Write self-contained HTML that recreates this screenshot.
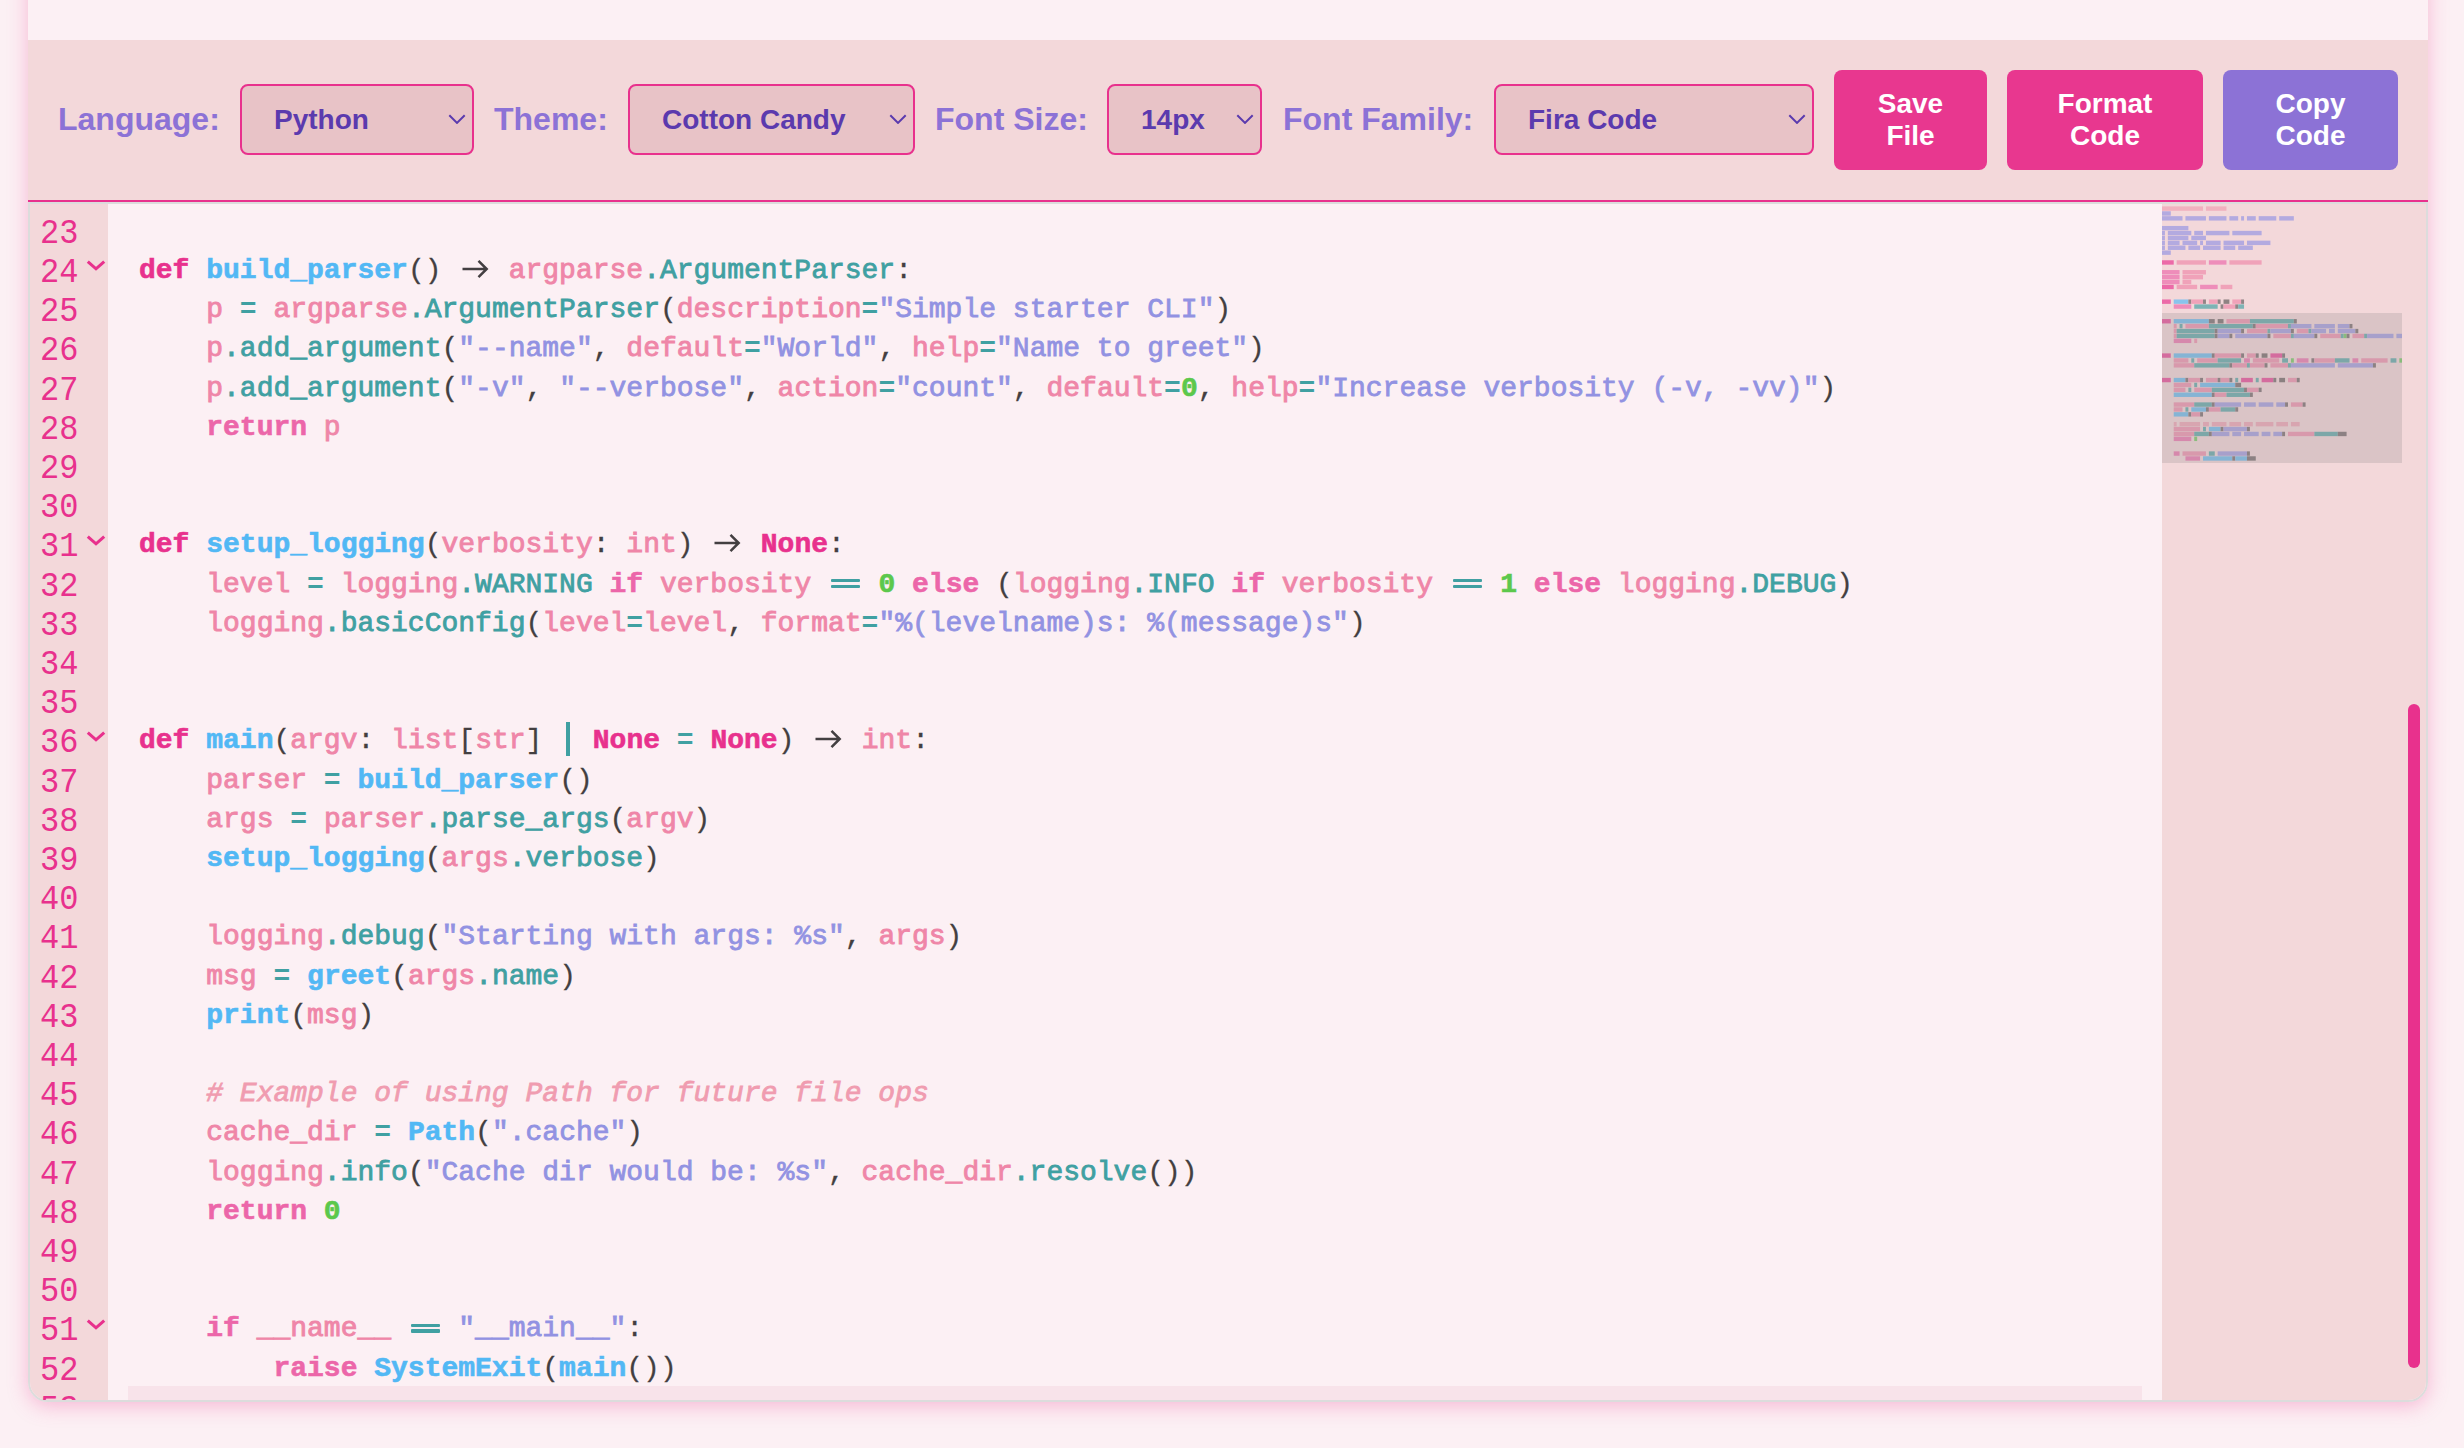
<!DOCTYPE html>
<html><head><meta charset="utf-8">
<style>
html,body{margin:0;padding:0}
@media (max-width:1300px){html{zoom:0.5}}
body{width:2464px;height:1448px;overflow:hidden;position:relative;background:#fcf0f4;font-family:"Liberation Sans",sans-serif}
.card{position:absolute;left:28px;top:-40px;width:2400px;height:1442px;background:#fcf0f4;border-radius:20px;box-shadow:0 4px 20px rgba(236,72,153,.34)}
.toolbar{position:absolute;left:28px;top:40px;width:2400px;height:160px;background:#f3d8da;border-bottom:2px solid #e8318d}
.lbl{position:absolute;top:0;height:159px;line-height:159px;font-weight:bold;font-size:32px;color:#8c72d6;white-space:nowrap}
.sel{position:absolute;top:84px;height:67px;border:2px solid #e8318d;border-radius:8px;background:#e8c3c7;box-sizing:content-box}
.sel span{position:absolute;left:32px;top:0;line-height:67px;font-weight:bold;font-size:28px;color:#5b3aae;white-space:nowrap}
.sel .chev{position:absolute;right:6px;top:27.5px}
.btn{position:absolute;top:70px;height:100px;border-radius:8px;color:#fff;font-weight:bold;font-size:28px;line-height:32px;padding-bottom:1px;box-sizing:border-box;text-align:center;display:flex;align-items:center;justify-content:center}
.editor{position:absolute;left:28px;top:202px;width:2396px;height:1196px;border:2px solid #dcdcdc;border-radius:0 0 20px 20px;overflow:hidden;background:#fcf0f4}
.gutter{position:absolute;left:0;top:0;width:78px;height:1196px;background:#f3d8da}
.mmbg{position:absolute;left:2132px;top:0;width:264px;height:1196px;background:#f3d8da}
.mm{position:absolute;left:2132px;top:0}
.slider{position:absolute;left:2132px;top:109px;width:240px;height:150px;background:rgba(121,121,121,.2)}
.vthumb{position:absolute;left:2378px;top:500px;width:12px;height:664px;border-radius:6px;background:#e8318d}
.hthumb{position:absolute;left:98px;top:1182px;width:2014px;height:14px;background:#f8e3ea}
.code{position:absolute;left:0;top:0;width:2464px;height:1400px;overflow:hidden;pointer-events:none}
.ln{position:absolute;left:139px;height:39.2px;line-height:39.2px;font-family:"Liberation Mono",monospace;font-size:28px;white-space:pre;color:#3d3a3b}
.num{position:absolute;left:30px;width:48.5px;text-align:right;height:39.2px;line-height:39.2px;font-family:"Liberation Mono",monospace;font-size:32px;color:#e8318d;transform:scaleY(1.1);transform-origin:0 28px}
.fold{position:absolute;left:86px}
.k1{color:#e8318d;font-weight:bold;-webkit-text-stroke:0.6px #e8318d}
.k2{color:#ec66a9;font-weight:bold;-webkit-text-stroke:0.6px #ec66a9}
.fn{color:#52b8f4;font-weight:bold;-webkit-text-stroke:0.6px #52b8f4}
.id{color:#ef86a8;-webkit-text-stroke:0.9px #ef86a8}
.at{color:#40a0a2;-webkit-text-stroke:0.8px #40a0a2}
.st{color:#9292e2;-webkit-text-stroke:0.8px #9292e2}
.nu{color:#5cc84c;font-weight:bold;-webkit-text-stroke:0.6px #5cc84c}
.pu{color:#433f41;-webkit-text-stroke:0.3px #433f41}
.op{color:#40a0a2;font-weight:bold}
.cm{color:#f09cb0;font-style:italic;-webkit-text-stroke:0.8px #f09cb0}
.ar{display:inline-block;width:33.6px;height:39.2px;position:relative;vertical-align:top}
.ar svg{position:absolute;left:0;top:8px}
.eq{display:inline-block;width:33.6px;height:39.2px;position:relative;vertical-align:top}
.eq:before,.eq:after{content:"";position:absolute;left:3px;width:29px;height:3.3px;background:#40a0a2;border-radius:1px}
.eq:before{top:14.3px}
.eq:after{top:20.1px}
.bar{display:inline-block;width:16.8px;height:39.2px;position:relative;vertical-align:top}
.bar:before{content:"";position:absolute;left:7px;top:1px;width:4px;height:34px;background:#40a0a2}
</style></head><body>
<div class="card"></div>
<div class="toolbar"></div>
<div class="lbl" style="left:58px;top:40px">Language:</div>
<div class="sel" style="left:240px;width:230px"><span>Python</span><svg class="chev" width="18" height="10" viewBox="0 0 18 10"><path d="M1.3 1.2L9 8.9L16.7 1.2" fill="none" stroke="#5a3aae" stroke-width="2"/></svg></div>
<div class="lbl" style="left:494px;top:40px">Theme:</div>
<div class="sel" style="left:628px;width:283px"><span>Cotton Candy</span><svg class="chev" width="18" height="10" viewBox="0 0 18 10"><path d="M1.3 1.2L9 8.9L16.7 1.2" fill="none" stroke="#5a3aae" stroke-width="2"/></svg></div>
<div class="lbl" style="left:935px;top:40px">Font Size:</div>
<div class="sel" style="left:1107px;width:151px"><span>14px</span><svg class="chev" width="18" height="10" viewBox="0 0 18 10"><path d="M1.3 1.2L9 8.9L16.7 1.2" fill="none" stroke="#5a3aae" stroke-width="2"/></svg></div>
<div class="lbl" style="left:1283px;top:40px">Font Family:</div>
<div class="sel" style="left:1494px;width:316px"><span>Fira Code</span><svg class="chev" width="18" height="10" viewBox="0 0 18 10"><path d="M1.3 1.2L9 8.9L16.7 1.2" fill="none" stroke="#5a3aae" stroke-width="2"/></svg></div>
<div class="btn" style="left:1834px;width:153px;background:#e8378f">Save<br>File</div>
<div class="btn" style="left:2007px;width:196px;background:#e8378f">Format<br>Code</div>
<div class="btn" style="left:2223px;width:175px;background:#8c72d6">Copy<br>Code</div>
<div class="editor">
<div class="gutter"></div>
<div class="mmbg"></div>
<svg class="mm" width="240" height="1196" viewBox="0 0 240 1196"><rect x="0.00" y="2.36" width="41.02" height="4.40" fill="#f1b1bf"/><rect x="43.95" y="2.36" width="20.51" height="4.40" fill="#f1b1bf"/><rect x="0.00" y="7.26" width="8.79" height="4.40" fill="#b3aae0"/><rect x="0.00" y="12.16" width="20.51" height="4.40" fill="#b3aae0"/><rect x="23.44" y="12.16" width="20.51" height="4.40" fill="#b3aae0"/><rect x="46.88" y="12.16" width="17.58" height="4.40" fill="#b3aae0"/><rect x="67.39" y="12.16" width="8.79" height="4.40" fill="#b3aae0"/><rect x="79.11" y="12.16" width="2.93" height="4.40" fill="#b3aae0"/><rect x="84.97" y="12.16" width="8.79" height="4.40" fill="#b3aae0"/><rect x="96.69" y="12.16" width="17.58" height="4.40" fill="#b3aae0"/><rect x="117.20" y="12.16" width="14.65" height="4.40" fill="#b3aae0"/><rect x="0.00" y="21.96" width="26.37" height="4.40" fill="#b3aae0"/><rect x="0.00" y="26.86" width="2.93" height="4.40" fill="#b3aae0"/><rect x="5.86" y="26.86" width="23.44" height="4.40" fill="#b3aae0"/><rect x="32.23" y="26.86" width="8.79" height="4.40" fill="#b3aae0"/><rect x="43.95" y="26.86" width="23.44" height="4.40" fill="#b3aae0"/><rect x="70.32" y="26.86" width="29.30" height="4.40" fill="#b3aae0"/><rect x="0.00" y="31.76" width="2.93" height="4.40" fill="#b3aae0"/><rect x="5.86" y="31.76" width="20.51" height="4.40" fill="#b3aae0"/><rect x="29.30" y="31.76" width="14.65" height="4.40" fill="#b3aae0"/><rect x="0.00" y="36.66" width="2.93" height="4.40" fill="#b3aae0"/><rect x="5.86" y="36.66" width="11.72" height="4.40" fill="#b3aae0"/><rect x="20.51" y="36.66" width="14.65" height="4.40" fill="#b3aae0"/><rect x="38.09" y="36.66" width="2.93" height="4.40" fill="#b3aae0"/><rect x="43.95" y="36.66" width="14.65" height="4.40" fill="#b3aae0"/><rect x="61.53" y="36.66" width="20.51" height="4.40" fill="#b3aae0"/><rect x="84.97" y="36.66" width="23.44" height="4.40" fill="#b3aae0"/><rect x="0.00" y="41.56" width="2.93" height="4.40" fill="#b3aae0"/><rect x="5.86" y="41.56" width="17.58" height="4.40" fill="#b3aae0"/><rect x="26.37" y="41.56" width="11.72" height="4.40" fill="#b3aae0"/><rect x="41.02" y="41.56" width="17.58" height="4.40" fill="#b3aae0"/><rect x="61.53" y="41.56" width="11.72" height="4.40" fill="#b3aae0"/><rect x="76.18" y="41.56" width="14.65" height="4.40" fill="#b3aae0"/><rect x="0.00" y="46.46" width="8.79" height="4.40" fill="#b3aae0"/><rect x="0.00" y="56.26" width="11.72" height="4.40" fill="#ec6aa8"/><rect x="14.65" y="56.26" width="29.30" height="4.40" fill="#f0a2b9"/><rect x="46.88" y="56.26" width="17.58" height="4.40" fill="#ee8dba"/><rect x="67.39" y="56.26" width="32.23" height="4.40" fill="#f0a2b9"/><rect x="0.00" y="66.06" width="17.58" height="4.40" fill="#ee8dba"/><rect x="20.51" y="66.06" width="23.44" height="4.40" fill="#f0a2b9"/><rect x="0.00" y="70.96" width="17.58" height="4.40" fill="#ee8dba"/><rect x="20.51" y="70.96" width="20.51" height="4.40" fill="#f0a2b9"/><rect x="0.00" y="75.86" width="17.58" height="4.40" fill="#ee8dba"/><rect x="20.51" y="75.86" width="8.79" height="4.40" fill="#f0a2b9"/><rect x="0.00" y="80.76" width="11.72" height="4.40" fill="#ec6aa8"/><rect x="14.65" y="80.76" width="20.51" height="4.40" fill="#f0a2b9"/><rect x="38.09" y="80.76" width="17.58" height="4.40" fill="#ee8dba"/><rect x="58.60" y="80.76" width="11.72" height="4.40" fill="#f0a2b9"/><rect x="0.00" y="95.46" width="8.79" height="4.40" fill="#ec6aa8"/><rect x="11.72" y="95.46" width="14.65" height="4.40" fill="#89c3ec"/><rect x="26.37" y="95.46" width="2.93" height="4.40" fill="#928486"/><rect x="29.30" y="95.46" width="11.72" height="4.40" fill="#f0a2b9"/><rect x="41.02" y="95.46" width="2.93" height="4.40" fill="#928486"/><rect x="46.88" y="95.46" width="8.79" height="4.40" fill="#f0a2b9"/><rect x="55.67" y="95.46" width="2.93" height="4.40" fill="#928486"/><rect x="61.53" y="95.46" width="5.86" height="4.40" fill="#8f8283"/><rect x="70.32" y="95.46" width="8.79" height="4.40" fill="#f0a2b9"/><rect x="79.11" y="95.46" width="2.93" height="4.40" fill="#928486"/><rect x="11.72" y="100.36" width="17.58" height="4.40" fill="#ee8dba"/><rect x="32.23" y="100.36" width="23.44" height="4.40" fill="#7db3b5"/><rect x="58.60" y="100.36" width="2.93" height="4.40" fill="#928486"/><rect x="61.53" y="100.36" width="11.72" height="4.40" fill="#f0a2b9"/><rect x="73.25" y="100.36" width="2.93" height="4.40" fill="#928486"/><rect x="76.18" y="100.36" width="5.86" height="4.40" fill="#7db3b5"/><rect x="0.00" y="115.06" width="8.79" height="4.40" fill="#ec6aa8"/><rect x="11.72" y="115.06" width="35.16" height="4.40" fill="#89c3ec"/><rect x="46.88" y="115.06" width="5.86" height="4.40" fill="#928486"/><rect x="55.67" y="115.06" width="5.86" height="4.40" fill="#8f8283"/><rect x="64.46" y="115.06" width="23.44" height="4.40" fill="#f0a2b9"/><rect x="87.90" y="115.06" width="43.95" height="4.40" fill="#7db3b5"/><rect x="131.85" y="115.06" width="2.93" height="4.40" fill="#928486"/><rect x="11.72" y="119.96" width="2.93" height="4.40" fill="#f0a2b9"/><rect x="17.58" y="119.96" width="2.93" height="4.40" fill="#7db3b5"/><rect x="23.44" y="119.96" width="23.44" height="4.40" fill="#f0a2b9"/><rect x="46.88" y="119.96" width="43.95" height="4.40" fill="#7db3b5"/><rect x="90.83" y="119.96" width="2.93" height="4.40" fill="#928486"/><rect x="93.76" y="119.96" width="32.23" height="4.40" fill="#f0a2b9"/><rect x="125.99" y="119.96" width="2.93" height="4.40" fill="#7db3b5"/><rect x="128.92" y="119.96" width="20.51" height="4.40" fill="#b3aae0"/><rect x="152.36" y="119.96" width="20.51" height="4.40" fill="#b3aae0"/><rect x="175.80" y="119.96" width="11.72" height="4.40" fill="#b3aae0"/><rect x="187.52" y="119.96" width="2.93" height="4.40" fill="#928486"/><rect x="11.72" y="124.86" width="2.93" height="4.40" fill="#f0a2b9"/><rect x="14.65" y="124.86" width="38.09" height="4.40" fill="#7db3b5"/><rect x="52.74" y="124.86" width="2.93" height="4.40" fill="#928486"/><rect x="55.67" y="124.86" width="23.44" height="4.40" fill="#b3aae0"/><rect x="79.11" y="124.86" width="2.93" height="4.40" fill="#928486"/><rect x="84.97" y="124.86" width="20.51" height="4.40" fill="#f0a2b9"/><rect x="105.48" y="124.86" width="2.93" height="4.40" fill="#7db3b5"/><rect x="108.41" y="124.86" width="20.51" height="4.40" fill="#b3aae0"/><rect x="128.92" y="124.86" width="2.93" height="4.40" fill="#928486"/><rect x="134.78" y="124.86" width="11.72" height="4.40" fill="#f0a2b9"/><rect x="146.50" y="124.86" width="2.93" height="4.40" fill="#7db3b5"/><rect x="149.43" y="124.86" width="14.65" height="4.40" fill="#b3aae0"/><rect x="167.01" y="124.86" width="5.86" height="4.40" fill="#b3aae0"/><rect x="175.80" y="124.86" width="17.58" height="4.40" fill="#b3aae0"/><rect x="193.38" y="124.86" width="2.93" height="4.40" fill="#928486"/><rect x="11.72" y="129.76" width="2.93" height="4.40" fill="#f0a2b9"/><rect x="14.65" y="129.76" width="38.09" height="4.40" fill="#7db3b5"/><rect x="52.74" y="129.76" width="2.93" height="4.40" fill="#928486"/><rect x="55.67" y="129.76" width="11.72" height="4.40" fill="#b3aae0"/><rect x="67.39" y="129.76" width="2.93" height="4.40" fill="#928486"/><rect x="73.25" y="129.76" width="32.23" height="4.40" fill="#b3aae0"/><rect x="105.48" y="129.76" width="2.93" height="4.40" fill="#928486"/><rect x="111.34" y="129.76" width="17.58" height="4.40" fill="#f0a2b9"/><rect x="128.92" y="129.76" width="2.93" height="4.40" fill="#7db3b5"/><rect x="131.85" y="129.76" width="20.51" height="4.40" fill="#b3aae0"/><rect x="152.36" y="129.76" width="2.93" height="4.40" fill="#928486"/><rect x="158.22" y="129.76" width="20.51" height="4.40" fill="#f0a2b9"/><rect x="178.73" y="129.76" width="2.93" height="4.40" fill="#7db3b5"/><rect x="181.66" y="129.76" width="2.93" height="4.40" fill="#8fce7d"/><rect x="184.59" y="129.76" width="2.93" height="4.40" fill="#928486"/><rect x="190.45" y="129.76" width="11.72" height="4.40" fill="#f0a2b9"/><rect x="202.17" y="129.76" width="2.93" height="4.40" fill="#7db3b5"/><rect x="205.10" y="129.76" width="26.37" height="4.40" fill="#b3aae0"/><rect x="234.40" y="129.76" width="26.37" height="4.40" fill="#b3aae0"/><rect x="263.70" y="129.76" width="11.72" height="4.40" fill="#b3aae0"/><rect x="278.35" y="129.76" width="14.65" height="4.40" fill="#b3aae0"/><rect x="293.00" y="129.76" width="2.93" height="4.40" fill="#928486"/><rect x="11.72" y="134.66" width="17.58" height="4.40" fill="#ee8dba"/><rect x="32.23" y="134.66" width="2.93" height="4.40" fill="#f0a2b9"/><rect x="0.00" y="149.36" width="8.79" height="4.40" fill="#ec6aa8"/><rect x="11.72" y="149.36" width="38.09" height="4.40" fill="#89c3ec"/><rect x="49.81" y="149.36" width="2.93" height="4.40" fill="#928486"/><rect x="52.74" y="149.36" width="26.37" height="4.40" fill="#f0a2b9"/><rect x="79.11" y="149.36" width="2.93" height="4.40" fill="#928486"/><rect x="84.97" y="149.36" width="8.79" height="4.40" fill="#f0a2b9"/><rect x="93.76" y="149.36" width="2.93" height="4.40" fill="#928486"/><rect x="99.62" y="149.36" width="5.86" height="4.40" fill="#8f8283"/><rect x="108.41" y="149.36" width="11.72" height="4.40" fill="#ec6aa8"/><rect x="120.13" y="149.36" width="2.93" height="4.40" fill="#928486"/><rect x="11.72" y="154.26" width="14.65" height="4.40" fill="#f0a2b9"/><rect x="29.30" y="154.26" width="2.93" height="4.40" fill="#7db3b5"/><rect x="35.16" y="154.26" width="20.51" height="4.40" fill="#f0a2b9"/><rect x="55.67" y="154.26" width="23.44" height="4.40" fill="#7db3b5"/><rect x="82.04" y="154.26" width="5.86" height="4.40" fill="#ee8dba"/><rect x="90.83" y="154.26" width="26.37" height="4.40" fill="#f0a2b9"/><rect x="120.13" y="154.26" width="5.86" height="4.40" fill="#7db3b5"/><rect x="128.92" y="154.26" width="2.93" height="4.40" fill="#8fce7d"/><rect x="134.78" y="154.26" width="11.72" height="4.40" fill="#ee8dba"/><rect x="149.43" y="154.26" width="2.93" height="4.40" fill="#928486"/><rect x="152.36" y="154.26" width="20.51" height="4.40" fill="#f0a2b9"/><rect x="172.87" y="154.26" width="14.65" height="4.40" fill="#7db3b5"/><rect x="190.45" y="154.26" width="5.86" height="4.40" fill="#ee8dba"/><rect x="199.24" y="154.26" width="26.37" height="4.40" fill="#f0a2b9"/><rect x="228.54" y="154.26" width="5.86" height="4.40" fill="#7db3b5"/><rect x="237.33" y="154.26" width="2.93" height="4.40" fill="#8fce7d"/><rect x="243.19" y="154.26" width="11.72" height="4.40" fill="#ee8dba"/><rect x="257.84" y="154.26" width="20.51" height="4.40" fill="#f0a2b9"/><rect x="278.35" y="154.26" width="17.58" height="4.40" fill="#7db3b5"/><rect x="295.93" y="154.26" width="2.93" height="4.40" fill="#928486"/><rect x="11.72" y="159.16" width="20.51" height="4.40" fill="#f0a2b9"/><rect x="32.23" y="159.16" width="35.16" height="4.40" fill="#7db3b5"/><rect x="67.39" y="159.16" width="2.93" height="4.40" fill="#928486"/><rect x="70.32" y="159.16" width="14.65" height="4.40" fill="#f0a2b9"/><rect x="84.97" y="159.16" width="2.93" height="4.40" fill="#7db3b5"/><rect x="87.90" y="159.16" width="14.65" height="4.40" fill="#f0a2b9"/><rect x="102.55" y="159.16" width="2.93" height="4.40" fill="#928486"/><rect x="108.41" y="159.16" width="17.58" height="4.40" fill="#f0a2b9"/><rect x="125.99" y="159.16" width="2.93" height="4.40" fill="#7db3b5"/><rect x="128.92" y="159.16" width="43.95" height="4.40" fill="#b3aae0"/><rect x="175.80" y="159.16" width="35.16" height="4.40" fill="#b3aae0"/><rect x="210.96" y="159.16" width="2.93" height="4.40" fill="#928486"/><rect x="0.00" y="173.86" width="8.79" height="4.40" fill="#ec6aa8"/><rect x="11.72" y="173.86" width="11.72" height="4.40" fill="#89c3ec"/><rect x="23.44" y="173.86" width="2.93" height="4.40" fill="#928486"/><rect x="26.37" y="173.86" width="11.72" height="4.40" fill="#f0a2b9"/><rect x="38.09" y="173.86" width="2.93" height="4.40" fill="#928486"/><rect x="43.95" y="173.86" width="11.72" height="4.40" fill="#f0a2b9"/><rect x="55.67" y="173.86" width="2.93" height="4.40" fill="#928486"/><rect x="58.60" y="173.86" width="8.79" height="4.40" fill="#f0a2b9"/><rect x="67.39" y="173.86" width="2.93" height="4.40" fill="#928486"/><rect x="73.25" y="173.86" width="2.93" height="4.40" fill="#7db3b5"/><rect x="79.11" y="173.86" width="11.72" height="4.40" fill="#ec6aa8"/><rect x="93.76" y="173.86" width="2.93" height="4.40" fill="#7db3b5"/><rect x="99.62" y="173.86" width="11.72" height="4.40" fill="#ec6aa8"/><rect x="111.34" y="173.86" width="2.93" height="4.40" fill="#928486"/><rect x="117.20" y="173.86" width="5.86" height="4.40" fill="#8f8283"/><rect x="125.99" y="173.86" width="8.79" height="4.40" fill="#f0a2b9"/><rect x="134.78" y="173.86" width="2.93" height="4.40" fill="#928486"/><rect x="11.72" y="178.76" width="17.58" height="4.40" fill="#f0a2b9"/><rect x="32.23" y="178.76" width="2.93" height="4.40" fill="#7db3b5"/><rect x="38.09" y="178.76" width="35.16" height="4.40" fill="#89c3ec"/><rect x="73.25" y="178.76" width="5.86" height="4.40" fill="#928486"/><rect x="11.72" y="183.66" width="11.72" height="4.40" fill="#f0a2b9"/><rect x="26.37" y="183.66" width="2.93" height="4.40" fill="#7db3b5"/><rect x="32.23" y="183.66" width="17.58" height="4.40" fill="#f0a2b9"/><rect x="49.81" y="183.66" width="32.23" height="4.40" fill="#7db3b5"/><rect x="82.04" y="183.66" width="2.93" height="4.40" fill="#928486"/><rect x="84.97" y="183.66" width="11.72" height="4.40" fill="#f0a2b9"/><rect x="96.69" y="183.66" width="2.93" height="4.40" fill="#928486"/><rect x="11.72" y="188.56" width="38.09" height="4.40" fill="#89c3ec"/><rect x="49.81" y="188.56" width="2.93" height="4.40" fill="#928486"/><rect x="52.74" y="188.56" width="11.72" height="4.40" fill="#f0a2b9"/><rect x="64.46" y="188.56" width="23.44" height="4.40" fill="#7db3b5"/><rect x="87.90" y="188.56" width="2.93" height="4.40" fill="#928486"/><rect x="11.72" y="198.36" width="20.51" height="4.40" fill="#f0a2b9"/><rect x="32.23" y="198.36" width="17.58" height="4.40" fill="#7db3b5"/><rect x="49.81" y="198.36" width="2.93" height="4.40" fill="#928486"/><rect x="52.74" y="198.36" width="26.37" height="4.40" fill="#b3aae0"/><rect x="82.04" y="198.36" width="11.72" height="4.40" fill="#b3aae0"/><rect x="96.69" y="198.36" width="14.65" height="4.40" fill="#b3aae0"/><rect x="114.27" y="198.36" width="8.79" height="4.40" fill="#b3aae0"/><rect x="123.06" y="198.36" width="2.93" height="4.40" fill="#928486"/><rect x="128.92" y="198.36" width="11.72" height="4.40" fill="#f0a2b9"/><rect x="140.64" y="198.36" width="2.93" height="4.40" fill="#928486"/><rect x="11.72" y="203.26" width="8.79" height="4.40" fill="#f0a2b9"/><rect x="23.44" y="203.26" width="2.93" height="4.40" fill="#7db3b5"/><rect x="29.30" y="203.26" width="14.65" height="4.40" fill="#89c3ec"/><rect x="43.95" y="203.26" width="2.93" height="4.40" fill="#928486"/><rect x="46.88" y="203.26" width="11.72" height="4.40" fill="#f0a2b9"/><rect x="58.60" y="203.26" width="14.65" height="4.40" fill="#7db3b5"/><rect x="73.25" y="203.26" width="2.93" height="4.40" fill="#928486"/><rect x="11.72" y="208.16" width="14.65" height="4.40" fill="#89c3ec"/><rect x="26.37" y="208.16" width="2.93" height="4.40" fill="#928486"/><rect x="29.30" y="208.16" width="8.79" height="4.40" fill="#f0a2b9"/><rect x="38.09" y="208.16" width="2.93" height="4.40" fill="#928486"/><rect x="11.72" y="217.96" width="2.93" height="4.40" fill="#f1b1bf"/><rect x="17.58" y="217.96" width="20.51" height="4.40" fill="#f1b1bf"/><rect x="41.02" y="217.96" width="5.86" height="4.40" fill="#f1b1bf"/><rect x="49.81" y="217.96" width="14.65" height="4.40" fill="#f1b1bf"/><rect x="67.39" y="217.96" width="11.72" height="4.40" fill="#f1b1bf"/><rect x="82.04" y="217.96" width="8.79" height="4.40" fill="#f1b1bf"/><rect x="93.76" y="217.96" width="17.58" height="4.40" fill="#f1b1bf"/><rect x="114.27" y="217.96" width="11.72" height="4.40" fill="#f1b1bf"/><rect x="128.92" y="217.96" width="8.79" height="4.40" fill="#f1b1bf"/><rect x="11.72" y="222.86" width="26.37" height="4.40" fill="#f0a2b9"/><rect x="41.02" y="222.86" width="2.93" height="4.40" fill="#7db3b5"/><rect x="46.88" y="222.86" width="11.72" height="4.40" fill="#89c3ec"/><rect x="58.60" y="222.86" width="2.93" height="4.40" fill="#928486"/><rect x="61.53" y="222.86" width="23.44" height="4.40" fill="#b3aae0"/><rect x="84.97" y="222.86" width="2.93" height="4.40" fill="#928486"/><rect x="11.72" y="227.76" width="20.51" height="4.40" fill="#f0a2b9"/><rect x="32.23" y="227.76" width="14.65" height="4.40" fill="#7db3b5"/><rect x="46.88" y="227.76" width="2.93" height="4.40" fill="#928486"/><rect x="49.81" y="227.76" width="17.58" height="4.40" fill="#b3aae0"/><rect x="70.32" y="227.76" width="8.79" height="4.40" fill="#b3aae0"/><rect x="82.04" y="227.76" width="14.65" height="4.40" fill="#b3aae0"/><rect x="99.62" y="227.76" width="8.79" height="4.40" fill="#b3aae0"/><rect x="111.34" y="227.76" width="8.79" height="4.40" fill="#b3aae0"/><rect x="120.13" y="227.76" width="2.93" height="4.40" fill="#928486"/><rect x="125.99" y="227.76" width="26.37" height="4.40" fill="#f0a2b9"/><rect x="152.36" y="227.76" width="23.44" height="4.40" fill="#7db3b5"/><rect x="175.80" y="227.76" width="8.79" height="4.40" fill="#928486"/><rect x="11.72" y="232.66" width="17.58" height="4.40" fill="#ee8dba"/><rect x="32.23" y="232.66" width="2.93" height="4.40" fill="#8fce7d"/><rect x="11.72" y="247.36" width="5.86" height="4.40" fill="#ee8dba"/><rect x="20.51" y="247.36" width="23.44" height="4.40" fill="#f0a2b9"/><rect x="46.88" y="247.36" width="5.86" height="4.40" fill="#7db3b5"/><rect x="55.67" y="247.36" width="29.30" height="4.40" fill="#b3aae0"/><rect x="84.97" y="247.36" width="2.93" height="4.40" fill="#928486"/><rect x="23.44" y="252.26" width="14.65" height="4.40" fill="#ee8dba"/><rect x="41.02" y="252.26" width="29.30" height="4.40" fill="#89c3ec"/><rect x="70.32" y="252.26" width="2.93" height="4.40" fill="#928486"/><rect x="73.25" y="252.26" width="11.72" height="4.40" fill="#89c3ec"/><rect x="84.97" y="252.26" width="8.79" height="4.40" fill="#928486"/></svg>
<div class="slider"></div>
<div class="vthumb"></div>
<div class="hthumb"></div>
</div>
<div class="code">
<div class="num" style="top:214.80px">23</div>
<div class="num" style="top:254.00px">24</div>
<div class="num" style="top:293.20px">25</div>
<div class="num" style="top:332.40px">26</div>
<div class="num" style="top:371.60px">27</div>
<div class="num" style="top:410.80px">28</div>
<div class="num" style="top:450.00px">29</div>
<div class="num" style="top:489.20px">30</div>
<div class="num" style="top:528.40px">31</div>
<div class="num" style="top:567.60px">32</div>
<div class="num" style="top:606.80px">33</div>
<div class="num" style="top:646.00px">34</div>
<div class="num" style="top:685.20px">35</div>
<div class="num" style="top:724.40px">36</div>
<div class="num" style="top:763.60px">37</div>
<div class="num" style="top:802.80px">38</div>
<div class="num" style="top:842.00px">39</div>
<div class="num" style="top:881.20px">40</div>
<div class="num" style="top:920.40px">41</div>
<div class="num" style="top:959.60px">42</div>
<div class="num" style="top:998.80px">43</div>
<div class="num" style="top:1038.00px">44</div>
<div class="num" style="top:1077.20px">45</div>
<div class="num" style="top:1116.40px">46</div>
<div class="num" style="top:1155.60px">47</div>
<div class="num" style="top:1194.80px">48</div>
<div class="num" style="top:1234.00px">49</div>
<div class="num" style="top:1273.20px">50</div>
<div class="num" style="top:1312.40px">51</div>
<div class="num" style="top:1351.60px">52</div>
<div class="num" style="top:1390.80px">53</div>
<svg class="fold" style="top:259.45px" width="20" height="14" viewBox="0 0 20 14"><path d="M1.8 2.6L10 9.8L18.2 2.6" fill="none" stroke="#e8318d" stroke-width="3.1"/></svg>
<svg class="fold" style="top:533.85px" width="20" height="14" viewBox="0 0 20 14"><path d="M1.8 2.6L10 9.8L18.2 2.6" fill="none" stroke="#e8318d" stroke-width="3.1"/></svg>
<svg class="fold" style="top:729.85px" width="20" height="14" viewBox="0 0 20 14"><path d="M1.8 2.6L10 9.8L18.2 2.6" fill="none" stroke="#e8318d" stroke-width="3.1"/></svg>
<svg class="fold" style="top:1317.85px" width="20" height="14" viewBox="0 0 20 14"><path d="M1.8 2.6L10 9.8L18.2 2.6" fill="none" stroke="#e8318d" stroke-width="3.1"/></svg>
<div class="ln" style="top:211.80px"></div>
<div class="ln" style="top:251.00px"><span class="k1">def</span> <span class="fn">build_parser</span><span class="pu">()</span> <span class="ar"><svg width="33.6" height="20" viewBox="0 0 33.6 20"><path d="M4.5 10H29M20.5 1.8L28.7 10L20.5 18.2" fill="none" stroke="#433f41" stroke-width="2.5" stroke-linecap="butt" stroke-linejoin="miter"/></svg></span> <span class="id">argparse</span><span class="at">.ArgumentParser</span><span class="pu">:</span></div>
<div class="ln" style="top:290.20px">    <span class="id">p</span> <span class="op">=</span> <span class="id">argparse</span><span class="at">.ArgumentParser</span><span class="pu">(</span><span class="id">description</span><span class="op">=</span><span class="st">&quot;Simple starter CLI&quot;</span><span class="pu">)</span></div>
<div class="ln" style="top:329.40px">    <span class="id">p</span><span class="at">.add_argument</span><span class="pu">(</span><span class="st">&quot;--name&quot;</span><span class="pu">,</span> <span class="id">default</span><span class="op">=</span><span class="st">&quot;World&quot;</span><span class="pu">,</span> <span class="id">help</span><span class="op">=</span><span class="st">&quot;Name to greet&quot;</span><span class="pu">)</span></div>
<div class="ln" style="top:368.60px">    <span class="id">p</span><span class="at">.add_argument</span><span class="pu">(</span><span class="st">&quot;-v&quot;</span><span class="pu">,</span> <span class="st">&quot;--verbose&quot;</span><span class="pu">,</span> <span class="id">action</span><span class="op">=</span><span class="st">&quot;count&quot;</span><span class="pu">,</span> <span class="id">default</span><span class="op">=</span><span class="nu">0</span><span class="pu">,</span> <span class="id">help</span><span class="op">=</span><span class="st">&quot;Increase verbosity (-v, -vv)&quot;</span><span class="pu">)</span></div>
<div class="ln" style="top:407.80px">    <span class="k2">return</span> <span class="id">p</span></div>
<div class="ln" style="top:447.00px"></div>
<div class="ln" style="top:486.20px"></div>
<div class="ln" style="top:525.40px"><span class="k1">def</span> <span class="fn">setup_logging</span><span class="pu">(</span><span class="id">verbosity</span><span class="pu">:</span> <span class="id">int</span><span class="pu">)</span> <span class="ar"><svg width="33.6" height="20" viewBox="0 0 33.6 20"><path d="M4.5 10H29M20.5 1.8L28.7 10L20.5 18.2" fill="none" stroke="#433f41" stroke-width="2.5" stroke-linecap="butt" stroke-linejoin="miter"/></svg></span> <span class="k1">None</span><span class="pu">:</span></div>
<div class="ln" style="top:564.60px">    <span class="id">level</span> <span class="op">=</span> <span class="id">logging</span><span class="at">.WARNING</span> <span class="k2">if</span> <span class="id">verbosity</span> <span class="eq"></span> <span class="nu">0</span> <span class="k2">else</span> <span class="pu">(</span><span class="id">logging</span><span class="at">.INFO</span> <span class="k2">if</span> <span class="id">verbosity</span> <span class="eq"></span> <span class="nu">1</span> <span class="k2">else</span> <span class="id">logging</span><span class="at">.DEBUG</span><span class="pu">)</span></div>
<div class="ln" style="top:603.80px">    <span class="id">logging</span><span class="at">.basicConfig</span><span class="pu">(</span><span class="id">level</span><span class="op">=</span><span class="id">level</span><span class="pu">,</span> <span class="id">format</span><span class="op">=</span><span class="st">&quot;%(levelname)s: %(message)s&quot;</span><span class="pu">)</span></div>
<div class="ln" style="top:643.00px"></div>
<div class="ln" style="top:682.20px"></div>
<div class="ln" style="top:721.40px"><span class="k1">def</span> <span class="fn">main</span><span class="pu">(</span><span class="id">argv</span><span class="pu">:</span> <span class="id">list</span><span class="pu">[</span><span class="id">str</span><span class="pu">]</span> <span class="bar"></span> <span class="k1">None</span> <span class="op">=</span> <span class="k1">None</span><span class="pu">)</span> <span class="ar"><svg width="33.6" height="20" viewBox="0 0 33.6 20"><path d="M4.5 10H29M20.5 1.8L28.7 10L20.5 18.2" fill="none" stroke="#433f41" stroke-width="2.5" stroke-linecap="butt" stroke-linejoin="miter"/></svg></span> <span class="id">int</span><span class="pu">:</span></div>
<div class="ln" style="top:760.60px">    <span class="id">parser</span> <span class="op">=</span> <span class="fn">build_parser</span><span class="pu">()</span></div>
<div class="ln" style="top:799.80px">    <span class="id">args</span> <span class="op">=</span> <span class="id">parser</span><span class="at">.parse_args</span><span class="pu">(</span><span class="id">argv</span><span class="pu">)</span></div>
<div class="ln" style="top:839.00px">    <span class="fn">setup_logging</span><span class="pu">(</span><span class="id">args</span><span class="at">.verbose</span><span class="pu">)</span></div>
<div class="ln" style="top:878.20px"></div>
<div class="ln" style="top:917.40px">    <span class="id">logging</span><span class="at">.debug</span><span class="pu">(</span><span class="st">&quot;Starting with args: %s&quot;</span><span class="pu">,</span> <span class="id">args</span><span class="pu">)</span></div>
<div class="ln" style="top:956.60px">    <span class="id">msg</span> <span class="op">=</span> <span class="fn">greet</span><span class="pu">(</span><span class="id">args</span><span class="at">.name</span><span class="pu">)</span></div>
<div class="ln" style="top:995.80px">    <span class="fn">print</span><span class="pu">(</span><span class="id">msg</span><span class="pu">)</span></div>
<div class="ln" style="top:1035.00px"></div>
<div class="ln" style="top:1074.20px">    <span class="cm"># Example of using Path for future file ops</span></div>
<div class="ln" style="top:1113.40px">    <span class="id">cache_dir</span> <span class="op">=</span> <span class="fn">Path</span><span class="pu">(</span><span class="st">&quot;.cache&quot;</span><span class="pu">)</span></div>
<div class="ln" style="top:1152.60px">    <span class="id">logging</span><span class="at">.info</span><span class="pu">(</span><span class="st">&quot;Cache dir would be: %s&quot;</span><span class="pu">,</span> <span class="id">cache_dir</span><span class="at">.resolve</span><span class="pu">())</span></div>
<div class="ln" style="top:1191.80px">    <span class="k2">return</span> <span class="nu">0</span></div>
<div class="ln" style="top:1231.00px"></div>
<div class="ln" style="top:1270.20px"></div>
<div class="ln" style="top:1309.40px">    <span class="k2">if</span> <span class="id">__name__</span> <span class="eq"></span> <span class="st">&quot;__main__&quot;</span><span class="pu">:</span></div>
<div class="ln" style="top:1348.60px">        <span class="k2">raise</span> <span class="fn">SystemExit</span><span class="pu">(</span><span class="fn">main</span><span class="pu">())</span></div>
<div class="ln" style="top:1387.80px"></div>
</div>
</body></html>
